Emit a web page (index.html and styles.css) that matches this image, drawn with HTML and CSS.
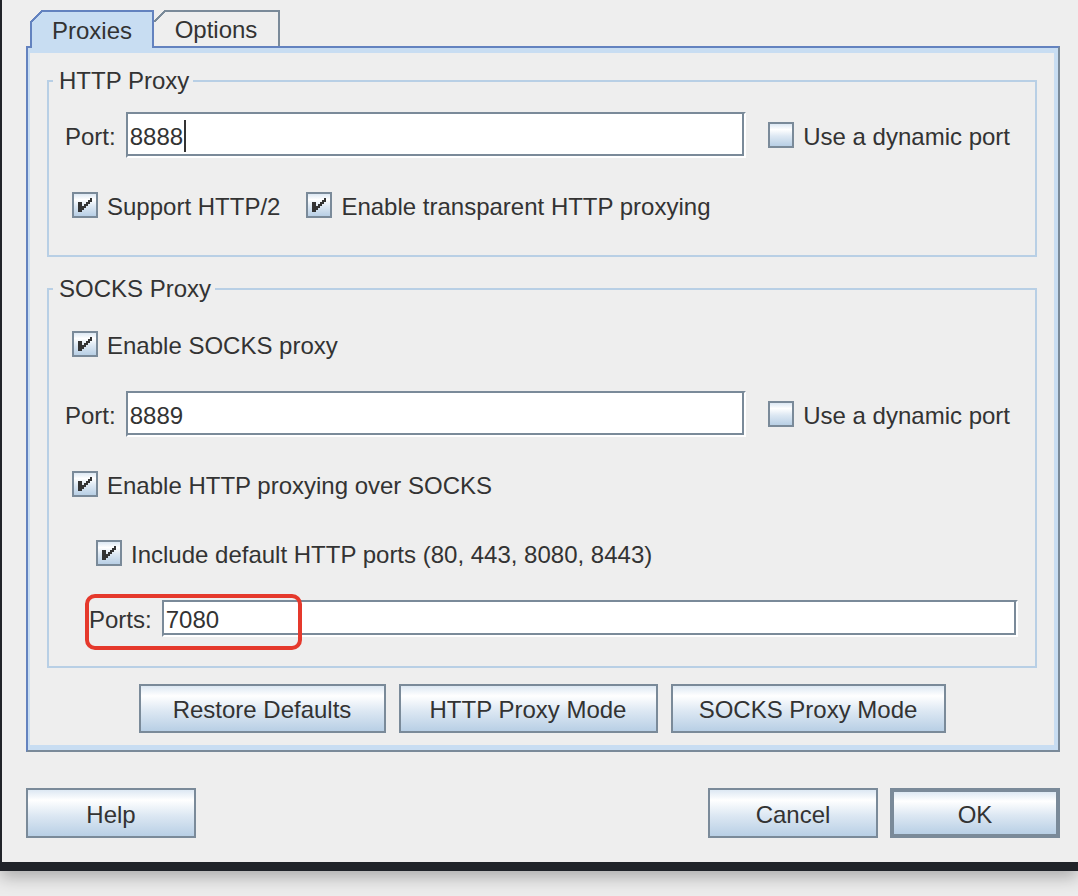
FILE: index.html
```html
<!DOCTYPE html>
<html>
<head>
<meta charset="utf-8">
<title>Proxy Settings</title>
<link rel="stylesheet" href="styles.css">
</head>
<body>
<div class="window">
  <div class="tabs">
    <div class="tab tab-selected">Proxies</div>
    <div class="tab tab-plain">Options</div>
  </div>
  <div class="panel">
    <div class="panel-inner">
      <fieldset class="group">
        <legend>HTTP Proxy</legend>
        <div class="row port-row http-port">
          <span class="label">Port:</span>
          <div class="field port-field"><span class="value">8888</span><span class="caret"></span></div>
          <span class="check"><span class="box"></span><span class="text">Use a dynamic port</span></span>
        </div>
        <div class="row checks-row http-checks">
          <span class="check"><span class="box"><svg class="tick" viewBox="1 1 11 11" width="22" height="22" shape-rendering="crispEdges"><path d="M3 5h2v5h-2z M9 3h1v2h-1z M8 4h1v2h-1z M7 5h1v2h-1z M6 6h1v2h-1z M5 7h1v2h-1z"/></svg></span><span class="text">Support HTTP/2</span></span>
          <span class="check"><span class="box"><svg class="tick" viewBox="1 1 11 11" width="22" height="22" shape-rendering="crispEdges"><path d="M3 5h2v5h-2z M9 3h1v2h-1z M8 4h1v2h-1z M7 5h1v2h-1z M6 6h1v2h-1z M5 7h1v2h-1z"/></svg></span><span class="text">Enable transparent HTTP proxying</span></span>
        </div>
      </fieldset>

      <fieldset class="group socks-group">
        <legend>SOCKS Proxy</legend>
        <div class="row checks-row socks-enable">
          <span class="check"><span class="box"><svg class="tick" viewBox="1 1 11 11" width="22" height="22" shape-rendering="crispEdges"><path d="M3 5h2v5h-2z M9 3h1v2h-1z M8 4h1v2h-1z M7 5h1v2h-1z M6 6h1v2h-1z M5 7h1v2h-1z"/></svg></span><span class="text">Enable SOCKS proxy</span></span>
        </div>
        <div class="row port-row socks-port">
          <span class="label">Port:</span>
          <div class="field port-field"><span class="value">8889</span></div>
          <span class="check"><span class="box"></span><span class="text">Use a dynamic port</span></span>
        </div>
        <div class="row checks-row socks-http">
          <span class="check"><span class="box"><svg class="tick" viewBox="1 1 11 11" width="22" height="22" shape-rendering="crispEdges"><path d="M3 5h2v5h-2z M9 3h1v2h-1z M8 4h1v2h-1z M7 5h1v2h-1z M6 6h1v2h-1z M5 7h1v2h-1z"/></svg></span><span class="text">Enable HTTP proxying over SOCKS</span></span>
        </div>
        <div class="row checks-row socks-default">
          <span class="check"><span class="box"><svg class="tick" viewBox="1 1 11 11" width="22" height="22" shape-rendering="crispEdges"><path d="M3 5h2v5h-2z M9 3h1v2h-1z M8 4h1v2h-1z M7 5h1v2h-1z M6 6h1v2h-1z M5 7h1v2h-1z"/></svg></span><span class="text">Include default HTTP ports (80, 443, 8080, 8443)</span></span>
        </div>
        <div class="row socks-ports">
          <span class="label">Ports:</span>
          <div class="field ports-field"><span class="value">7080</span></div>
          <div class="highlight"></div>
        </div>
      </fieldset>

      <div class="mode-buttons">
        <div class="btn btn-restore">Restore Defaults</div>
        <div class="btn btn-http">HTTP Proxy Mode</div>
        <div class="btn btn-socks">SOCKS Proxy Mode</div>
      </div>
    </div>
  </div>

  <div class="dialog-buttons">
    <div class="btn btn-dialog">Help</div>
    <div class="spacer"></div>
    <div class="btn btn-dialog">Cancel</div>
    <div class="btn btn-dialog btn-default">OK</div>
  </div>
</div>
</body>
</html>
```
FILE: styles.css
```css
* { box-sizing: border-box; }
html, body { margin: 0; padding: 0; }
body {
  width: 1078px;
  height: 896px;
  overflow: hidden;
  background: #ececec;
  font-family: "Liberation Sans", Arial, sans-serif;
  font-size: 24px;
  color: #333333;
}

.window {
  height: 871px;
  background: #eeeeee;
  border-left: 2px solid #202329;
  border-bottom: 9px solid #202329;
  box-shadow: 0 6px 16px rgba(0, 0, 0, 0.28);
  padding: 10px 18px 0 24px;
  display: flex;
  flex-direction: column;
}

/* Tabs */
.tabs {
  display: flex;
  align-items: flex-start;
  height: 36px;
  padding-left: 4px;
  position: relative;
  z-index: 1;
}
.tab {
  position: relative;
  height: 36px;
  display: flex;
  align-items: center;
  justify-content: center;
  line-height: 1;
  padding-top: 2px;
}
.tab-selected {
  width: 124px;
  height: 38px;
  background: #c8ddf2;
  border: 2px solid #6382bf;
  border-bottom: none;
}
.tab-selected::before {
  content: "";
  position: absolute;
  left: -2px;
  top: -2px;
  width: 13px;
  height: 13px;
  background: linear-gradient(to bottom right, #eeeeee 0, #eeeeee calc(50% - 1.2px), #6382bf calc(50% - 1.2px), #6382bf calc(50% + 1.2px), transparent calc(50% + 1.2px));
}
.tab-plain {
  width: 126px;
  background: #eeeeee;
  border-top: 2px solid #7a8a99;
  border-right: 2px solid #7a8a99;
}
.tab-plain::before {
  content: "";
  position: absolute;
  left: 0;
  top: -2px;
  width: 12px;
  height: 12px;
  background: linear-gradient(to bottom right, #eeeeee 0, #eeeeee calc(50% - 1.2px), #7a8a99 calc(50% - 1.2px), #7a8a99 calc(50% + 1.2px), transparent calc(50% + 1.2px));
}

/* Tab panel */
.panel {
  border-style: solid;
  border-width: 2px;
  border-color: #6382bf #7a8a99 #7a8a99 #6382bf;
}
.panel-inner {
  border-style: solid;
  border-color: #c8ddf2;
  border-width: 5px 4px 5px 2px;
  padding: 16px 17px 12px 17px;
}

/* Group boxes */
.group {
  margin: 0;
  padding: 0;
  min-width: 0;
  border: 2px solid #b8cfe5;
}
.group legend {
  margin-left: 4px;
  padding: 0 4px 0 6px;
  height: 24px;
  line-height: 24px;
}
.socks-group { margin-top: 20px; }

.row {
  display: flex;
  align-items: center;
}
.label { margin-right: 10px; padding-top: 3px; }
.text, .value { padding-top: 3px; }

.port-row {
  height: 46px;
  padding: 0 25px 0 16px;
}
.http-port { margin-top: 19px; }
.socks-port { margin-top: 34px; }

.checks-row {
  height: 26px;
  padding-left: 23px;
  gap: 26px;
}
.http-checks { margin-top: 34px; margin-bottom: 37px; }
.socks-enable { margin-top: 30px; }
.socks-http { margin-top: 34px; }
.socks-default { margin-top: 43px; padding-left: 47px; }

.socks-ports {
  position: relative;
  height: 37px;
  margin-top: 34px;
  margin-bottom: 29px;
  padding: 0 17px 0 40px;
}

/* Text fields */
.field {
  flex: 1;
  height: 100%;
  display: flex;
  align-items: center;
  padding-left: 2px;
  background: #ffffff;
  border-style: solid;
  border-width: 2px;
  border-color: #7a8a99 #ffffff #ffffff #7a8a99;
  box-shadow: inset -2px -2px 0 #7a8a99;
}
.port-field { margin-right: 22px; }
.caret {
  width: 2px;
  height: 32px;
  margin-left: 1px;
  margin-top: 2px;
  background: #333333;
}

.highlight {
  position: absolute;
  left: 36px;
  top: -6px;
  width: 217px;
  height: 56px;
  border: 4px solid #e5392c;
  border-radius: 10px;
}

/* Check boxes */
.check {
  display: flex;
  align-items: center;
  gap: 9px;
  white-space: nowrap;
}
.box {
  width: 26px;
  height: 26px;
  flex: none;
  border: 2px solid #7a8a99;
  background: linear-gradient(#dde8f3 0%, #ffffff 25%, #dde8f3 55%, #b8cfe5 100%);
  display: flex;
}
.tick { display: block; fill: #333333; }

/* Buttons */
.btn {
  display: flex;
  align-items: center;
  justify-content: center;
  padding-top: 3px;
  border: 2px solid #7a8a99;
  background: linear-gradient(#dde8f3 0%, #ffffff 22%, #dde8f3 55%, #b8cfe5 100%);
  white-space: nowrap;
}
.mode-buttons {
  display: flex;
  justify-content: center;
  gap: 13px;
  margin-top: 16px;
}
.mode-buttons .btn { height: 49px; }
.btn-restore { width: 247px; }
.btn-http { width: 259px; }
.btn-socks { width: 275px; }

.dialog-buttons {
  display: flex;
  gap: 12px;
  height: 50px;
  margin-top: 36px;
}
.spacer { flex: 1; }
.btn-dialog { width: 170px; }
.btn-default { border-width: 4px; }
```
